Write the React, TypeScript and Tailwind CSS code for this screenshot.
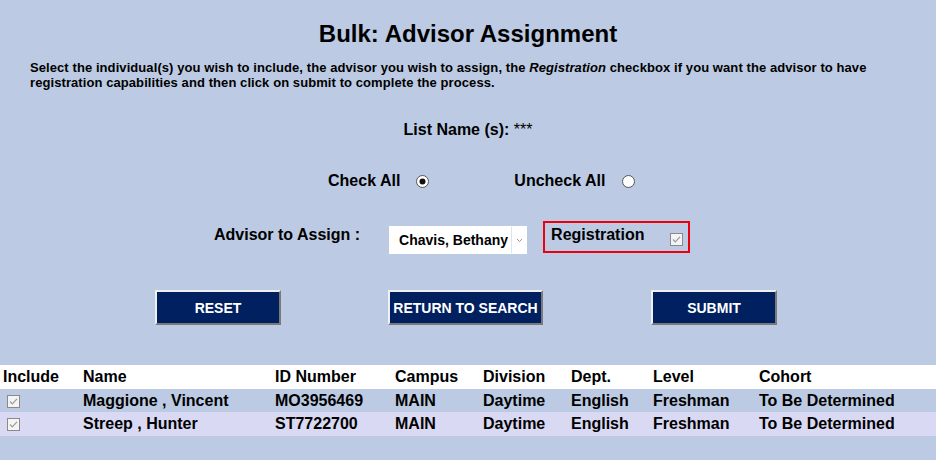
import React from "react";

const Check = () => (
  <svg width="13" height="13" viewBox="0 0 13 13" className="block">
    <rect x="0.5" y="0.5" width="12" height="12" fill="#f4f4f4" stroke="#8a8a8a" />
    <path d="M3 6.5 L5.3 8.8 L10 3.8" fill="none" stroke="#9a9a9a" strokeWidth="1.2" />
  </svg>
);

const Radio = ({ on }: { on?: boolean }) => (
  <svg width="13" height="13" viewBox="0 0 13 13" className="block">
    <circle cx="6.5" cy="6.5" r="6" fill="#fff" stroke="#555" />
    {on && <circle cx="6.5" cy="6.5" r="3" fill="#111" />}
  </svg>
);

const Btn = ({ label, w }: { label: string; w: string }) => (
  <div
    className={`${w} h-[35px] pt-[2px] flex items-center justify-center bg-[#002060] text-white text-[14px] font-bold border-2 border-t-[#f0f0f0] border-l-[#f0f0f0] border-b-[#7a7a7a] border-r-[#7a7a7a]`}
  >
    {label}
  </div>
);

const cols = "grid grid-cols-[80px_192px_120px_88px_88px_82px_106px_1fr] pl-[3px] items-center";

const rows = [
  { name: "Maggione , Vincent", id: "MO3956469", bg: "bg-[#bccbe3]" },
  { name: "Streep , Hunter", id: "ST7722700", bg: "bg-[#d9d9f3]" },
];

export default function App() {
  return (
    <div
      className="w-[936px] h-[460px] bg-[#bccbe3] text-black overflow-hidden flex flex-col"
      style={{ fontFamily: '"Liberation Sans", Arial, sans-serif' }}
    >
      <h1 className="mt-[20px] text-center text-[24px] leading-[28px] font-bold">
        Bulk: Advisor Assignment
      </h1>
      <p className="mt-[12px] px-[30px] text-[13px] leading-[15px] font-bold tracking-[0.08px]">
        Select the individual(s) you wish to include, the advisor you wish to assign, the{" "}
        <i>Registration</i> checkbox if you want the advisor to have registration capabilities and then
        click on submit to complete the process.
      </p>
      <div className="mt-[30px] text-center text-[16px] leading-[20px] font-bold">
        List Name (s): <span className="font-normal">***</span>
      </div>
      <div className="mt-[31px] flex items-center pl-[328px] text-[16px] leading-[20px] font-bold h-[20px]">
        <span>Check All</span>
        <span className="ml-[16px]">
          <Radio on />
        </span>
        <span className="ml-[85px]">Uncheck All</span>
        <span className="ml-[17px]">
          <Radio />
        </span>
      </div>
      <div className="mt-[30px] flex items-start pl-[214px] h-[33px]">
        <span className="mt-[4px] text-[16px] leading-[20px] font-bold">Advisor to Assign :</span>
        <div className="ml-[29px] mt-[5px] w-[138px] h-[28px] bg-white flex items-center">
          <span className="pl-[10px] w-[122px] text-[14px] font-bold whitespace-nowrap">Chavis, Bethany</span>
          <span className="w-px h-[26px] bg-[#e2e2e2]" />
          <svg width="15" height="10" viewBox="0 0 15 10" className="block">
            <path d="M5 4 L7.5 6.5 L10 4" fill="none" stroke="#9a9a9a" strokeWidth="1" />
          </svg>
        </div>
        <div className="ml-[16px] w-[147px] h-[32px] border-2 border-[#ec0010] flex items-start">
          <span className="ml-[6px] mt-[2px] text-[16px] leading-[20px] font-bold">Registration</span>
          <span className="ml-auto mr-[5px] mt-[10px]">
            <Check />
          </span>
        </div>
      </div>
      <div className="mt-[36px] flex pl-[155px]">
        <Btn label="RESET" w="w-[126px]" />
        <div className="ml-[107px]">
          <Btn label="RETURN TO SEARCH" w="w-[155px]" />
        </div>
        <div className="ml-[108px]">
          <Btn label="SUBMIT" w="w-[126px]" />
        </div>
      </div>
      <div className="mt-[40px] text-[16px] font-bold">
        <div className={`${cols} h-[24px] bg-white`}>
          <span>Include</span>
          <span>Name</span>
          <span>ID Number</span>
          <span>Campus</span>
          <span>Division</span>
          <span>Dept.</span>
          <span>Level</span>
          <span>Cohort</span>
        </div>
        {rows.map((r, i) => (
          <div key={r.id} className={`${cols} ${i === 0 ? "h-[23px]" : "h-[24px]"} ${r.bg}`}>
            <span className="pl-[4px]">
              <Check />
            </span>
            <span>{r.name}</span>
            <span>{r.id}</span>
            <span>MAIN</span>
            <span>Daytime</span>
            <span>English</span>
            <span>Freshman</span>
            <span>To Be Determined</span>
          </div>
        ))}
      </div>
    </div>
  );
}
